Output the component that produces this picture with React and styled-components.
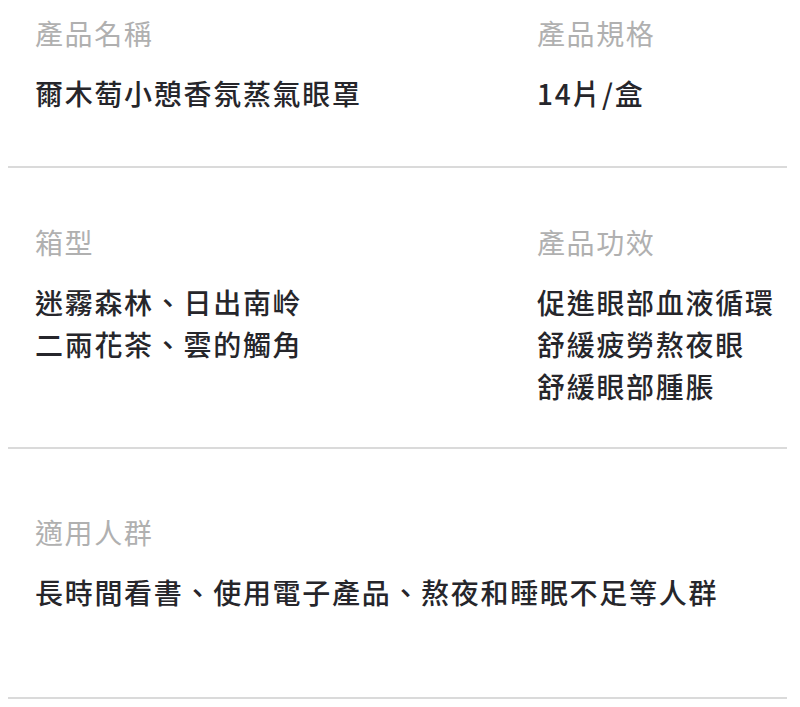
import React from "react";
import styled, { createGlobalStyle } from "styled-components";

const rows = [
  {
    top: 12,
    bottom: 52,
    fields: [
      { label: "產品名稱", lines: ["爾木萄小憩香氛蒸氣眼罩"] },
      { label: "產品規格", lines: ["14片/盒"] },
    ],
  },
  {
    top: 53,
    bottom: 40,
    fields: [
      { label: "箱型", lines: ["迷霧森林、日出南岭", "二兩花茶、雲的觸角"] },
      {
        label: "產品功效",
        lines: ["促進眼部血液循環", "舒緩疲勞熬夜眼", "舒緩眼部腫脹"],
      },
    ],
  },
  {
    top: 62,
    bottom: 84,
    fields: [
      {
        label: "適用人群",
        lines: ["長時間看書、使用電子產品、熬夜和睡眠不足等人群"],
        wide: true,
      },
    ],
  },
];

export default function App() {
  return (
    <>
      <GlobalStyle />
      <Page>
        {rows.map((row, i) => (
          <Section key={i} $top={row.top} $bottom={row.bottom}>
            {row.fields.map((f) => (
              <Field key={f.label} $wide={f.wide}>
                <Label>{f.label}</Label>
                <Value>
                  {f.lines.map((l) => (
                    <Line key={l}>{l}</Line>
                  ))}
                </Value>
              </Field>
            ))}
          </Section>
        ))}
      </Page>
    </>
  );
}

const GlobalStyle = createGlobalStyle`
  body {
    margin: 0;
    background: #fff;
    font-family: "Noto Sans CJK TC", "Noto Sans", sans-serif;
  }
`;

const Page = styled.main`
  padding: 0 13px 0 8px;
`;

const Section = styled.section`
  display: grid;
  grid-template-columns: 502px 1fr;
  padding: ${({ $top }) => $top}px 0 ${({ $bottom }) => $bottom}px 27px;
  border-bottom: 2px solid #dadada;
`;

const Field = styled.div`
  display: flex;
  flex-direction: column;
  gap: 18px;
  grid-column: ${({ $wide }) => ($wide ? "1 / -1" : "auto")};
`;

const Label = styled.div`
  font-size: 28px;
  line-height: 42px;
  letter-spacing: 1.6px;
  color: #b0b0b0;
`;

const Value = styled.div`
  display: flex;
  flex-direction: column;
`;

const Line = styled.div`
  font-size: 28px;
  font-weight: 500;
  line-height: 42px;
  letter-spacing: 1.7px;
  color: #26262b;
  white-space: nowrap;
`;
